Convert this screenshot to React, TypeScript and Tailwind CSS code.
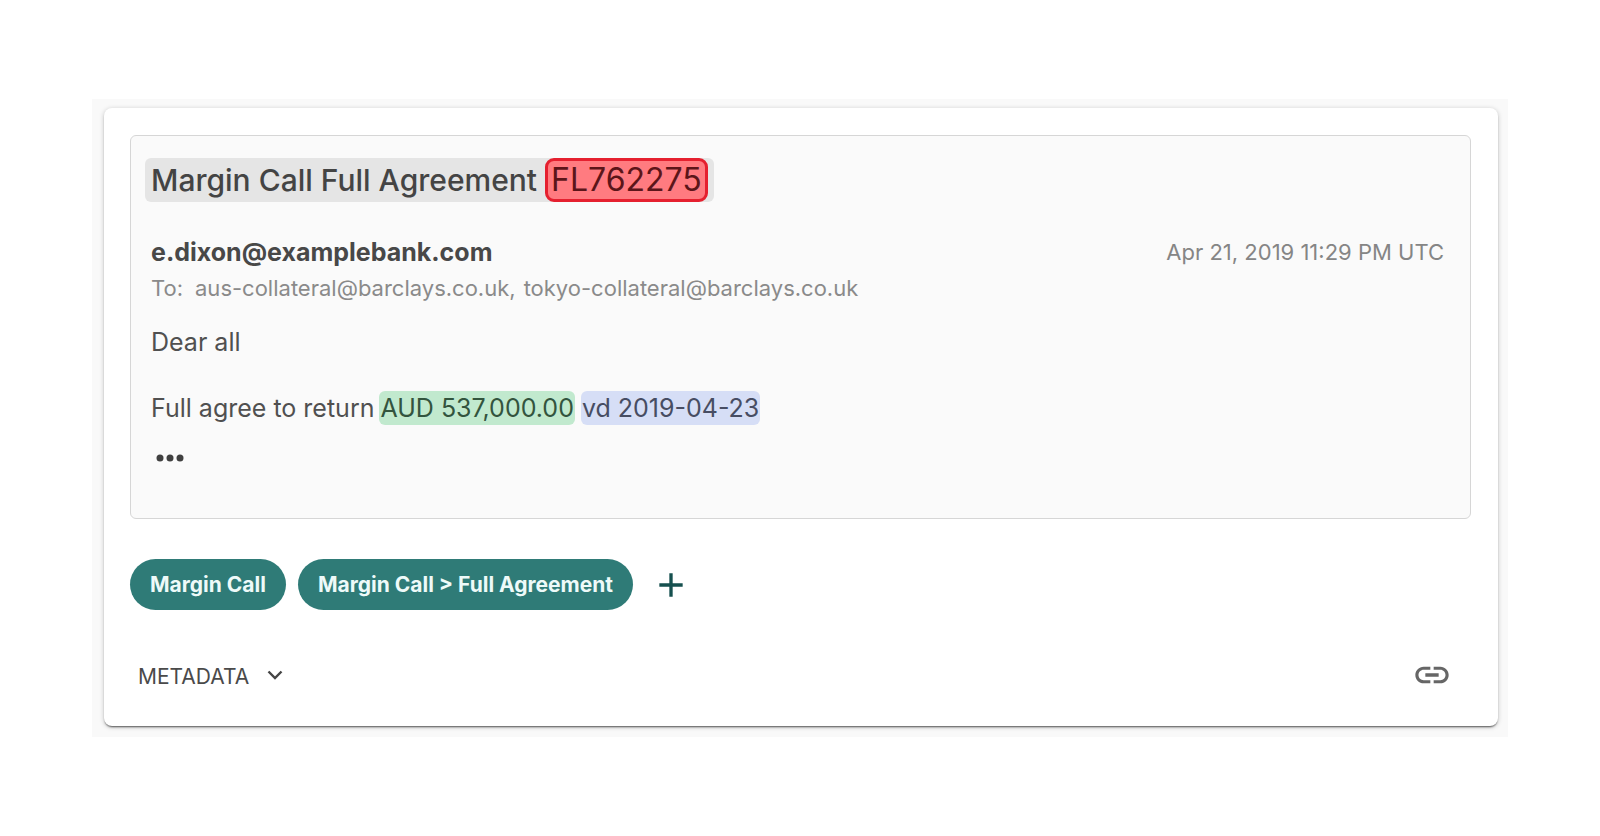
import { MdAdd, MdLink } from 'react-icons/md';

const tags = ['Margin Call', 'Margin Call > Full Agreement'];

function Message() {
  return (
    <article className="rounded-md border border-[#d6d6d6] bg-[#fafafa] px-3.5 pt-[22px] pb-[46px]">
      <h1 className="flex h-11 w-fit items-center rounded-md bg-[#e5e5e5] px-1.5 text-[30px] leading-[46px] text-[#444444]">
        <span className="mr-2 font-medium">Margin Call Full Agreement</span>
        <mark className="flex h-11 items-center rounded-[9px] border-[3px] border-[#e5202f] bg-[#ff7b80] px-[3px] text-[32px] text-[#5c1519]">
          FL762275
        </mark>
      </h1>
      <div className="px-1.5">
        <header className="mt-8 flex items-center justify-between pr-1.5">
          <p className="text-[25px] leading-9 font-bold text-[#484848]">e.dixon@examplebank.com</p>
          <time className="text-[22px] leading-9 text-[#858585]">Apr 21, 2019 11:29 PM UTC</time>
        </header>
        <p className="flex text-[22px] leading-9 text-[#8a8a8a]">
          <span className="mr-3">To:</span>
          <span className="mr-2">aus-collateral@barclays.co.uk,</span>
          <span>tokyo-collateral@barclays.co.uk</span>
        </p>
        <p className="mt-[18px] text-[25px] leading-9 text-[#505050]">Dear all</p>
        <p className="mt-[31px] flex items-center text-[25px] leading-[34px] text-[#505050]">
          <span className="mr-[5px]">Full agree to return</span>
          <mark className="mr-1.5 rounded-md bg-[#c1e9ce] px-px text-[#33543e]">AUD 537,000.00</mark>
          <mark className="rounded-md bg-[#d6def6] px-px text-[#474d63]">vd 2019-04-23</mark>
        </p>
        <button type="button" aria-label="Show more" className="mt-[19px] flex h-7 items-center px-[5px]">
          <svg className="h-2 w-7" viewBox="0 0 28 8" fill="#404040">
            <circle cx="4" cy="4" r="3.5" />
            <circle cx="14" cy="4" r="3.5" />
            <circle cx="24" cy="4" r="3.5" />
          </svg>
        </button>
      </div>
    </article>
  );
}

export default function App() {
  return (
    <main className="min-h-screen bg-white px-[92px] pt-[99px] font-['Inter','Liberation_Sans',sans-serif]">
      <div className="bg-[#f9f9f9] pt-[9px] pr-2.5 pb-[11px] pl-3">
        <section className="rounded-lg bg-white pt-[27px] pr-[27px] pb-[31px] pl-[26px] shadow-[0_2px_2px_-1px_rgba(0,0,0,0.6),0_1px_5px_rgba(0,0,0,0.22)]">
          <Message />
          <div className="mt-10 flex items-center">
            {tags.map((tag) => (
              <button
                key={tag}
                type="button"
                className="mr-3 h-[51px] rounded-full bg-[#2f7b77] px-5 text-[21px] leading-7 font-bold text-[#eefaf9]"
              >
                {tag}
              </button>
            ))}
            <button type="button" aria-label="Add tag" className="ml-1.5">
              <MdAdd className="h-10 w-10 text-[#16504f]" />
            </button>
          </div>
          <footer className="mt-[45px] flex items-center justify-between pr-[19px] pl-2">
            <button type="button" className="flex items-center text-[21px] leading-9 text-[#4a4a4a]">
              <span className="pt-1">METADATA</span>
              <svg
                className="ml-[18px] h-4 w-4"
                viewBox="0 0 16 16"
                fill="none"
                stroke="#454545"
                strokeWidth="2.4"
              >
                <path d="M1.500 4.500 8 11l6.500-6.500" />
              </svg>
            </button>
            <button type="button" aria-label="Copy link">
              <MdLink className="h-10 w-10 text-[#666666]" />
            </button>
          </footer>
        </section>
      </div>
    </main>
  );
}
